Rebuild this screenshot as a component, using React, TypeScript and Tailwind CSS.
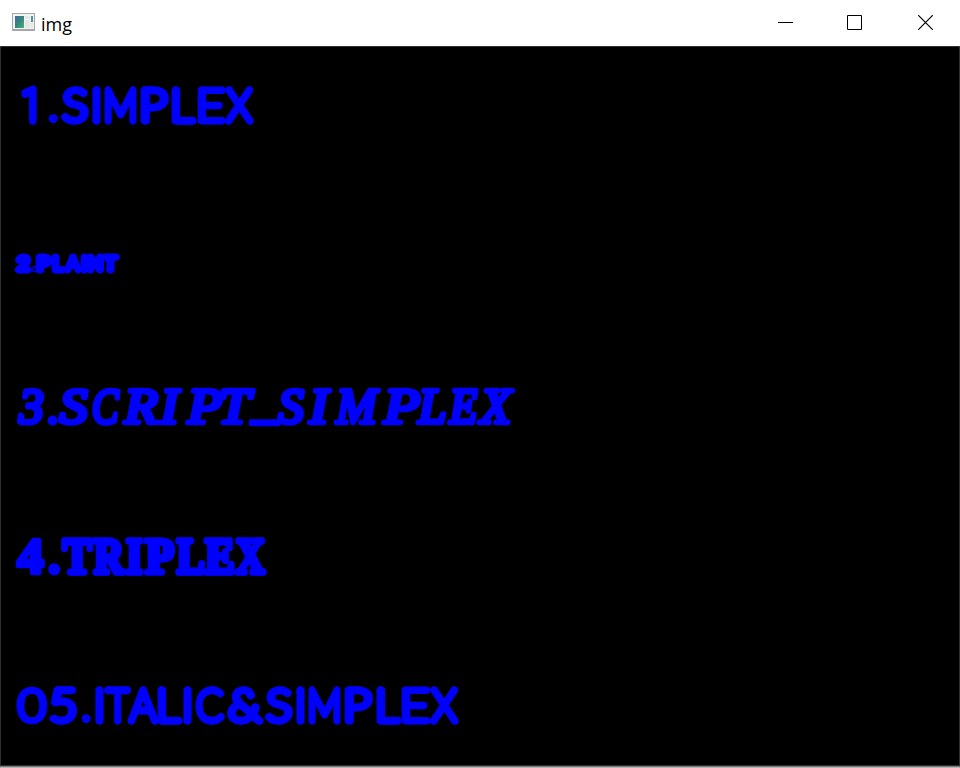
import React from "react";

interface Tweak {
  family?: string;
  stroke?: number;
  rise?: number;
}

type Glyph = [char: string, left: number, right: number, tweak?: Tweak];

interface Line {
  family: string;
  weight: number;
  italic?: boolean;
  size: number;
  baseline: number;
  stroke: number;
  glyphs: Glyph[];
}

const LINES: Line[] = [
  {
    family: "Lato, sans-serif", weight: 100, size: 43.5, baseline: 75.4, stroke: 7.4,
    glyphs: [["1", 21, 37, { family: "Roboto, sans-serif" }], [".", 48, 59, { stroke: 6, rise: 1 }], ["S", 61, 90], ["I", 93, 101], ["M", 105, 137], ["P", 141, 170], ["L", 172, 198], ["E", 198, 226, { stroke: 6.8 }], ["X", 225, 254]],
  },
  {
    family: "Lato, sans-serif", weight: 100, size: 18, baseline: 224, stroke: 7,
    glyphs: [["2", 15, 33], [".", 31, 39, { stroke: 5 }], ["P", 36, 54], ["L", 52, 67], ["A", 64, 83], ["I", 81, 89], ["N", 87, 105], ["T", 101, 120]],
  },
  {
    family: "'Liberation Serif', serif", weight: 400, italic: true, size: 50, baseline: 376.5, stroke: 4.6,
    glyphs: [["3", 16, 45], [".", 48, 57, { stroke: 4 }], ["S", 57, 90], ["C", 92, 121], ["R", 121, 160], ["I", 157, 183], ["P", 184, 224], ["T", 219, 256], ["_", 248, 281, { rise: 6 }], ["S", 276, 306], ["I", 306, 333], ["M", 333, 381], ["P", 380, 422], ["L", 415, 447], ["E", 447, 479], ["X", 476, 516]],
  },
  {
    family: "'Liberation Serif', serif", weight: 700, size: 50, baseline: 526.7, stroke: 5.5,
    glyphs: [["4", 15, 46, { stroke: 4.5 }], [".", 48, 61, { stroke: 4 }], ["T", 61, 94], ["R", 92, 127], ["I", 125, 144], ["P", 143, 176], ["L", 175, 206], ["E", 203, 235], ["X", 234, 267]],
  },
  {
    family: "Lato, sans-serif", weight: 100, size: 43.5, baseline: 675.4, stroke: 7.4,
    glyphs: [["0", 16, 48, { stroke: 6.6 }], ["5", 49, 78], [".", 81, 92, { stroke: 6, rise: 1 }], ["I", 96, 104], ["T", 104, 132], ["A", 127, 159], ["L", 158, 184], ["I", 184, 192], ["C", 195, 225], ["&", 227, 264], ["S", 265, 294], ["I", 297, 305], ["M", 309, 341], ["P", 345, 374], ["L", 377, 403], ["E", 402, 431, { stroke: 6.8 }], ["X", 430, 459]],
  },
];

const pen = document.createElement("canvas").getContext("2d")!;

// Stretches each character so that its inked width fills the slot it is given.
function placeGlyph(line: Line, [char, left, right, tweak]: Glyph) {
  pen.font = `${line.italic ? "italic " : ""}${line.weight} ${line.size}px ${tweak?.family ?? line.family}`;
  const m = pen.measureText(char);
  const ink = m.actualBoundingBoxRight + m.actualBoundingBoxLeft;
  const narrow = char === "." || (char === "I" && right - left < 10);
  // The outline widens together with the glyph, so it counts as part of the ink.
  const scale = narrow ? 1 : (right - left) / (ink + (tweak?.stroke ?? line.stroke));
  const center = (left + right) / 2;
  return {
    x: center - ((m.actualBoundingBoxRight - m.actualBoundingBoxLeft) / 2) * scale,
    length: m.width * scale,
  };
}

function DrawnLine({ line }: { line: Line }) {
  return (
    <text
      y={line.baseline}
      fill="#0000ff"
      stroke="#0000ff"
      strokeWidth={line.stroke}
      strokeLinejoin="round"
      fontFamily={line.family}
      fontWeight={line.weight}
      fontStyle={line.italic ? "italic" : "normal"}
      fontSize={line.size}
    >
      {line.glyphs.map((g, i) => {
        const p = placeGlyph(line, g);
        const tweak = g[3];
        return (
          <tspan
            key={i}
            x={p.x}
            y={line.baseline - (tweak?.rise ?? 0)}
            textLength={p.length}
            lengthAdjust="spacingAndGlyphs"
            fontFamily={tweak?.family}
            strokeWidth={tweak?.stroke}
          >
            {g[0]}
          </tspan>
        );
      })}
    </text>
  );
}

function AppIcon() {
  return (
    <svg width="24" height="20" viewBox="0 0 24 20" aria-hidden="true">
      <defs>
        <linearGradient id="pane" x1="0" y1="0" x2="1" y2="1">
          <stop offset="0" stopColor="#4169a5" />
          <stop offset=".5" stopColor="#35877f" />
          <stop offset="1" stopColor="#44b568" />
        </linearGradient>
      </defs>
      <rect x="0" y="0" width="23" height="18" fill="#a5a5aa" />
      <rect x="1" y="1" width="21" height="15" fill="#f3f3f4" />
      <rect x="3" y="3" width="9" height="12" fill="url(#pane)" />
      <rect x="13" y="3" width="5" height="12" fill="#e5e6e8" />
      <rect x="13" y="6" width="5" height="1" fill="#fafafa" />
      <rect x="19" y="3" width="2" height="6" fill="#4f91a0" />
      <rect x="19" y="10" width="2" height="5" fill="#e3e4e8" />
    </svg>
  );
}

export default function App() {
  return (
    <div className="flex h-[768px] w-[960px] flex-col overflow-hidden bg-white">
      <header className="flex h-[46px] shrink-0 justify-between bg-white">
        <div className="flex items-start pl-3">
          <span className="pt-[13px]"><AppIcon /></span>
          <span className="pl-[5px] pt-[11px] font-['Open_Sans',sans-serif] text-[18px] leading-[27px] text-black">img</span>
        </div>
        <div className="flex">
          <button aria-label="Minimize" className="flex w-[69px] justify-center pl-[2px] pt-[15px]">
            <svg width="15" height="15" shapeRendering="crispEdges"><path d="M0 7.5H15" stroke="#000" /></svg>
          </button>
          <button aria-label="Maximize" className="flex w-[71px] justify-center pr-px pt-[15px]">
            <svg width="15" height="15"><path d="M.5.5H14.5V14.5H.5Z" fill="none" stroke="#000" /></svg>
          </button>
          <button aria-label="Close" className="flex w-[70px] justify-center pt-[15px]">
            <svg width="15" height="15"><path d="M.2.2L14.8 14.8M14.8.2L.2 14.8" fill="none" stroke="#000" strokeWidth="1.2" /></svg>
          </button>
        </div>
      </header>
      <main className="h-[720px] shrink-0 border border-[#303030] bg-black">
        <svg width="958" height="718" viewBox="1 47 958 718" className="block">
          <g transform="translate(0 46)">
            {LINES.map((line, i) => <DrawnLine key={i} line={line} />)}
          </g>
        </svg>
      </main>
      <div className="h-px shrink-0 bg-[#777]" />
      <div className="h-px shrink-0 bg-[#b5b5b5]" />
    </div>
  );
}
